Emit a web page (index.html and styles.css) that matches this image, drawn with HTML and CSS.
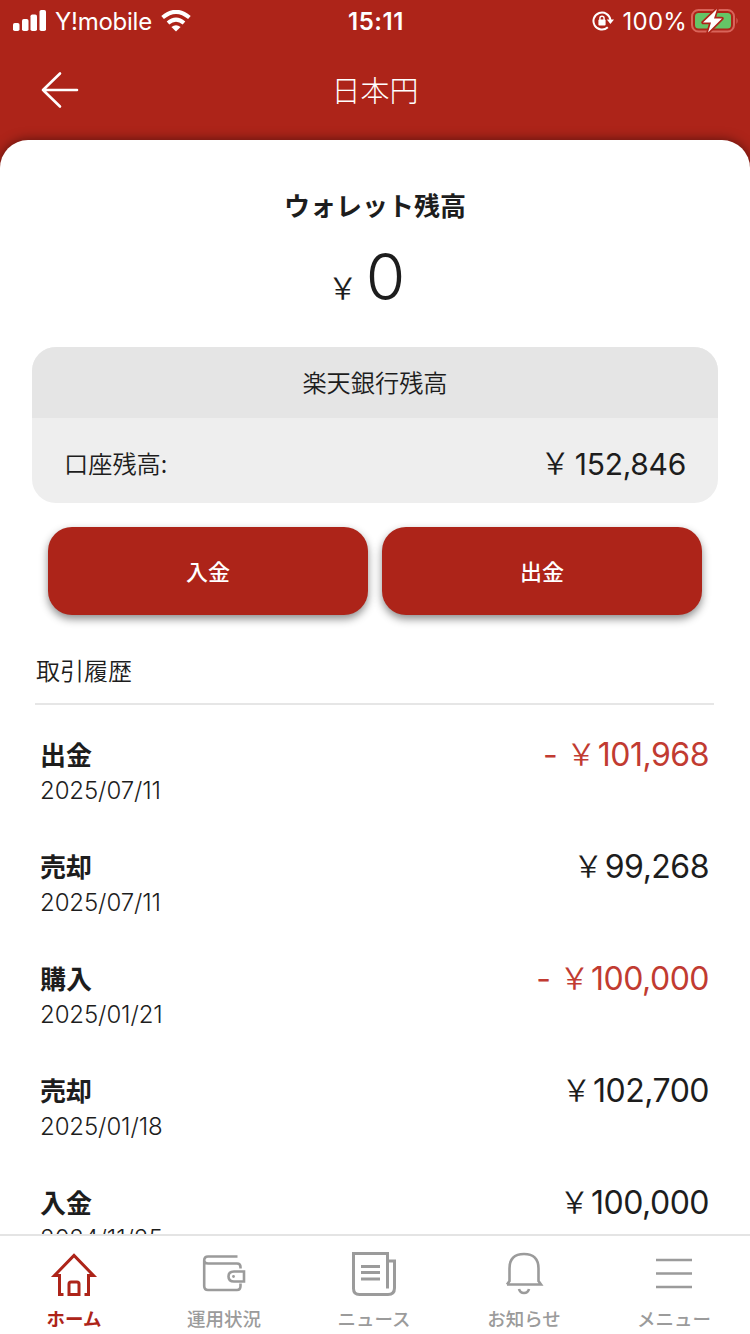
FILE: index.html
```html
<!DOCTYPE html>
<html lang="ja">
<head>
<meta charset="utf-8">
<title>日本円</title>
<link rel="stylesheet" href="styles.css">
</head>
<body>
<div class="app">
  <div class="status">
    <div class="status-left">
      <svg class="signal" width="34" height="22" viewBox="0 0 34 22" fill="#fff"><rect x="0" y="13" width="6.500" height="8" rx="1.8"/><rect x="9" y="9" width="6.500" height="12" rx="1.8"/><rect x="17.500" y="4.5" width="6.500" height="16.5" rx="1.8"/><rect x="26.500" y="0" width="6.500" height="21" rx="1.8"/></svg>
      <span class="carrier">Y!mobile</span>
      <svg class="wifi" width="30" height="22" viewBox="0 0 30 22" fill="none" stroke="#fff" stroke-width="4"><path d="M1.600 7.600Q15-4 28.400 7.600"/><path d="M7 13Q15 6.200 23 13"/><path d="M15 21.500L10.400 17Q15 13.400 19.600 17Z" fill="#fff" stroke="none"/></svg>
    </div>
    <span class="clock">15:11</span>
    <div class="status-right">
      <svg width="22" height="20" viewBox="0 0 22 20" fill="none" stroke="#fff" stroke-width="2"><path d="M15.800 16.200A8.500 8.500 0 1 1 18.400 9"/><path d="M14.800 8.500H22L18.400 13Z" fill="#fff" stroke="none"/><rect x="6.400" y="8.600" width="7.200" height="5.800" rx="1" fill="#fff" stroke="none"/><path d="M7.900 9V7.400a2.100 2.100 0 0 1 4.200 0V9" stroke-width="1.400"/></svg>
      <span class="percent">100%</span>
      <svg class="battery" width="48" height="24" viewBox="0 0 48 24"><rect x="1" y="1" width="42" height="21.500" rx="6.500" fill="none" stroke="#d9645a" stroke-width="2"/><rect x="4" y="4" width="36" height="15.500" rx="3.500" fill="#65c466"/><path d="M45.500 8.500Q47.800 11.800 45.500 15Z" fill="#d9645a"/><path d="M26 0L12 13.500H20L17 23.500L31 9.500H23Z" fill="#fff" stroke="#ad2419" stroke-width="3.400" stroke-linejoin="round" paint-order="stroke"/></svg>
    </div>
  </div>
  <div class="nav">
    <svg class="back" width="38" height="38" viewBox="0 0 38 38" fill="none" stroke="#fff" stroke-width="2.600" stroke-linecap="round" stroke-linejoin="round"><path d="M36 19H2M19 2.500L2 19L19 35.500"/></svg>
    <h1 class="nav-title">日本円</h1>
  </div>
  <main class="sheet">
    <h2 class="wallet-title">ウォレット残高</h2>
    <div class="wallet-amount"><span class="yen yen-wallet">￥</span><span class="zero">0</span></div>
    <section class="bank">
      <div class="bank-head">楽天銀行残高</div>
      <div class="bank-row"><span class="bank-label">口座残高:</span><span class="bank-value"><span class="yen yen-bank">￥</span>152,846</span></div>
    </section>
    <div class="actions"><button class="action">入金</button><button class="action">出金</button></div>
    <h3 class="history-title">取引履歴</h3>
    <div class="list">
      <div class="row"><div><div class="kind">出金</div><div class="date">2025/07/11</div></div><div class="sum minus"><span class="sign">-</span><span class="yen">￥</span><span class="num">101,968</span></div></div>
      <div class="row"><div><div class="kind">売却</div><div class="date">2025/07/11</div></div><div class="sum"><span class="yen">￥</span><span class="num">99,268</span></div></div>
      <div class="row"><div><div class="kind">購入</div><div class="date">2025/01/21</div></div><div class="sum minus"><span class="sign">-</span><span class="yen">￥</span><span class="num">100,000</span></div></div>
      <div class="row"><div><div class="kind">売却</div><div class="date">2025/01/18</div></div><div class="sum"><span class="yen">￥</span><span class="num">102,700</span></div></div>
      <div class="row"><div><div class="kind">入金</div><div class="date">2024/11/25</div></div><div class="sum"><span class="yen">￥</span><span class="num">100,000</span></div></div>
    </div>
  </main>
  <nav class="tabs">
    <div class="tab active"><svg width="48" height="48" viewBox="0 0 48 48" fill="none" stroke="currentColor" stroke-width="3"><path d="M13.500 43.500H9.500V24.500H4.500L24 4.500L43.500 24.500H38.500V43.500H34.500"/><path d="M19 43.500V33Q19 31 21 31H27Q29 31 29 33V43.500Z"/></svg><span>ホーム</span></div>
    <div class="tab"><svg width="48" height="48" viewBox="0 0 48 48" fill="none" stroke="currentColor" stroke-width="2.600"><path d="M37.500 5.500H8Q4.200 5.500 4.200 9.500V35Q4.200 39 8 39H37Q40.500 39 40.500 35V32.500M4.200 9.500Q4.200 12.500 8 12.500H37Q40.500 12.500 40.500 16V17.500"/><path d="M44 20.500H34Q28.500 20.500 28.500 25.500T34 30.500H44Z"/><circle cx="33.500" cy="25.500" r="1.400" fill="currentColor" stroke="none"/></svg><span>運用状況</span></div>
    <div class="tab"><svg width="48" height="48" viewBox="0 0 48 48" fill="none" stroke="currentColor" stroke-width="3"><path d="M37.500 37.500V2.500H3.500V37.500Q3.500 43.500 9.500 43.500H38Q44.500 43.500 44.500 37V10H37.500"/><path d="M11 15.500H30M11 21.500H30M11 28H30" stroke-width="3"/></svg><span>ニュース</span></div>
    <div class="tab"><svg width="48" height="48" viewBox="0 0 48 48" fill="none" stroke="currentColor" stroke-width="2.600"><path d="M7 33.500H41L38.500 30V17.500Q38.500 3 24 3T9.500 17.500V30L7 33.500"/><path d="M19 38Q20 42 24 42T29 38"/></svg><span>お知らせ</span></div>
    <div class="tab"><svg width="48" height="48" viewBox="0 0 48 48" fill="none" stroke="currentColor" stroke-width="2.600"><path d="M6 9H42M6 22.500H42M6 36H42"/></svg><span>メニュー</span></div>
  </nav>
</div>
</body>
</html>
```
FILE: styles.css
```css
* { box-sizing: border-box; }
body {
  margin: 0;
  background: #ad2419;
  color: #1d1d1d;
  font-family: Inter, "Noto Sans CJK JP", sans-serif;
}
h1, h2, h3 { margin: 0; font-weight: 400; }
svg { display: block; flex: none; }
.app { width: 750px; height: 1334px; display: flex; flex-direction: column; overflow: hidden; background: #ad2419; }

.status { height: 40px; flex: none; display: grid; grid-template-columns: 1fr auto 1fr; align-items: center; padding: 0 11px 0 13px; color: #fff; font-size: 24px; line-height: 40px; }
.status-left, .status-right { display: flex; align-items: center; }
.status-right { justify-content: flex-end; }
.signal { margin-right: 8px; }
.carrier { padding-top: 3px; line-height: 38px; letter-spacing: -0.25px; }
.wifi { margin-left: 9px; }
.clock { padding-top: 3px; line-height: 38px; font-weight: 600; letter-spacing: 0.6px; }
.percent { margin: 0 4px 0 9px; padding-top: 3px; line-height: 38px; letter-spacing: 0.2px; }

.nav { height: 100px; flex: none; display: grid; grid-template-columns: 38px 1fr 38px; align-items: center; padding: 0 41px; color: #fff; }
.nav-title { padding-bottom: 3px; text-align: center; font-size: 29px; line-height: 40px; font-weight: 300; font-family: "Noto Sans CJK JP", sans-serif; }

.sheet { flex: 1; min-height: 0; overflow: hidden; background: #fff; border-radius: 28px 28px 0 0; box-shadow: 0 0 12px rgba(0, 0, 0, 0.5); }
.wallet-title { margin-top: 47px; text-align: center; font-size: 26px; line-height: 40px; font-weight: 700; }
.wallet-amount { display: flex; justify-content: center; align-items: baseline; height: 80px; margin: 10px 0 30px; padding-right: 17px; line-height: 80px; }
.zero { font-size: 64px; font-weight: 300; }
.yen { display: inline-block; font-family: "Noto Sans CJK JP", sans-serif; font-size: 30px; font-weight: 350; line-height: 1; transform: translateY(-1.5px); }
.sum .yen { margin: 0 2px 0 -1px; }
.yen-wallet { margin-right: 8px; }
.yen-bank { margin-right: 5px; }

.bank { margin: 0 32px; height: 156px; border-radius: 24px; overflow: hidden; background: #eee; }
.bank-head { height: 71px; padding-top: 1px; line-height: 71px; background: #e5e5e5; text-align: center; font-size: 24.2px; font-weight: 350; }
.bank-row { height: 85px; display: flex; justify-content: space-between; align-items: center; padding: 6px 32px 0; }
.bank-label { font-family: "Noto Sans CJK JP", sans-serif; font-size: 24.2px; line-height: 36px; padding-bottom: 2px; font-weight: 350; }
.bank-value { font-size: 30px; line-height: 36px; letter-spacing: -0.3px; }

.actions { display: flex; gap: 14px; margin: 24px 48px 0; }
.action { flex: 1; height: 88px; padding: 0 0 2px; border: 0; border-radius: 24px; background: #ad2419; color: #fff; font: 500 22px/86px "Noto Sans CJK JP", sans-serif; box-shadow: 0 4px 8px rgba(0, 0, 0, 0.45); }

.history-title { margin: 37px 36px 0 35px; height: 53px; line-height: 40px; padding-left: 1px; font-size: 24px; font-weight: 350; border-bottom: 2px solid #e6e6e6; }
.list { padding: 31px 41px 0 40px; }
.row { height: 112px; display: flex; justify-content: space-between; }
.kind { font-size: 26px; line-height: 40px; font-weight: 700; }
.date { font-size: 24px; line-height: 30px; font-weight: 300; letter-spacing: -0.1px; }
.sum { font-size: 32px; line-height: 38px; height: 38px; display: flex; align-items: baseline; letter-spacing: -0.5px; }
.minus { color: #c13b31; }
.sign { margin-right: 10px; }

.tabs { height: 100px; flex: none; display: grid; grid-template-columns: repeat(5, 1fr); padding-top: 15px; background: #fff; border-top: 2px solid #e4e4e4; }
.tab { display: flex; flex-direction: column; align-items: center; padding-right: 2px; color: #9b9b9b; font-size: 18.5px; line-height: 40px; font-weight: 500; }
.tab.active { color: #ad2419; font-weight: 700; }
```
